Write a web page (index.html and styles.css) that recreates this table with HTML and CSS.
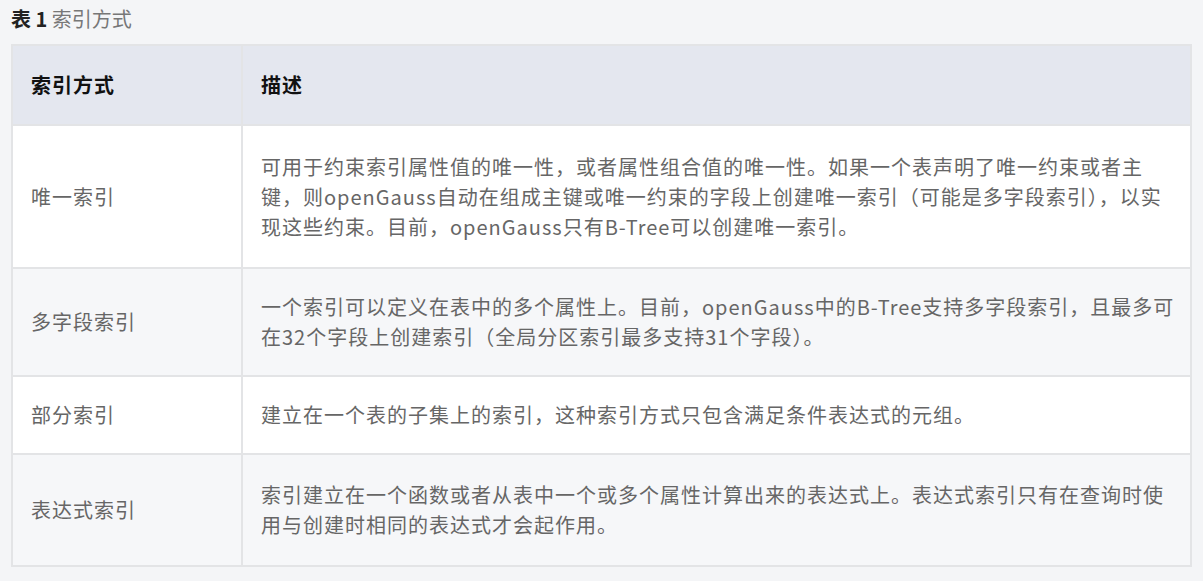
FILE: index.html
```html
<!DOCTYPE html>
<html lang="zh-CN">

<head>
    <meta charset="UTF-8">
    <meta name="viewport" content="width=device-width, initial-scale=1.0">
    <title>索引方式</title>
    <link rel="stylesheet" href="styles.css">
</head>

<body>

    <p class="table-caption"><strong>表 1</strong> 索引方式</p>

    <table class="index-table">
        <colgroup>
            <col class="col-name">
            <col>
        </colgroup>
        <thead>
            <tr>
                <th>索引方式</th>
                <th>描述</th>
            </tr>
        </thead>
        <tbody>
            <tr>
                <td>唯一索引</td>
                <td>可用于约束索引属性值的唯一性，或者属性组合值的唯一性。如果一个表声明了唯一约束或者主键，则openGauss自动在组成主键或唯一约束的字段上创建唯一索引（可能是多字段索引），以实现这些约束。目前，openGauss只有B-Tree可以创建唯一索引。</td>
            </tr>
            <tr>
                <td>多字段索引</td>
                <td>一个索引可以定义在表中的多个属性上。目前，openGauss中的B-Tree支持多字段索引，且最多可在32个字段上创建索引（全局分区索引最多支持31个字段）。</td>
            </tr>
            <tr>
                <td>部分索引</td>
                <td>建立在一个表的子集上的索引，这种索引方式只包含满足条件表达式的元组。</td>
            </tr>
            <tr class="last-row">
                <td>表达式索引</td>
                <td>索引建立在一个函数或者从表中一个或多个属性计算出来的表达式上。表达式索引只有在查询时使用与创建时相同的表达式才会起作用。</td>
            </tr>
        </tbody>
    </table>

</body>

</html>
```

FILE: styles.css
```css
/* Estilos generales */
body {
    font-family: "Noto Sans CJK SC", "Noto Sans", sans-serif;
    font-size: 20px;
    line-height: 30px;
    background-color: #f4f5f7;
    color: #666;
    margin: 0;
    padding: 4px 11px 14px;
}

.table-caption {
    margin: 0 0 10px;
    color: #777;
}

.table-caption strong {
    color: #222;
}

/* Tabla */
.index-table {
    width: 100%;
    border-collapse: collapse;
    table-layout: fixed;
    letter-spacing: 1px;
}

.index-table .col-name {
    width: 230px;
}

.index-table th,
.index-table td {
    border: 2px solid #e3e4e6;
    padding: 23px 8px 23px 18px;
    text-align: left;
    vertical-align: middle;
}

.index-table th {
    background-color: #e4e7ef;
    color: #111;
    font-weight: bold;
    padding-top: 24px;
    padding-bottom: 24px;
}

.index-table tbody tr:first-child td {
    padding-top: 26px;
    padding-bottom: 25px;
}

.index-table tbody tr.last-row td {
    padding-top: 25px;
    padding-bottom: 25px;
}

.index-table tbody tr:nth-child(odd) {
    background-color: #fff;
}

.index-table tbody tr:nth-child(even) {
    background-color: #f6f7f9;
}
```
